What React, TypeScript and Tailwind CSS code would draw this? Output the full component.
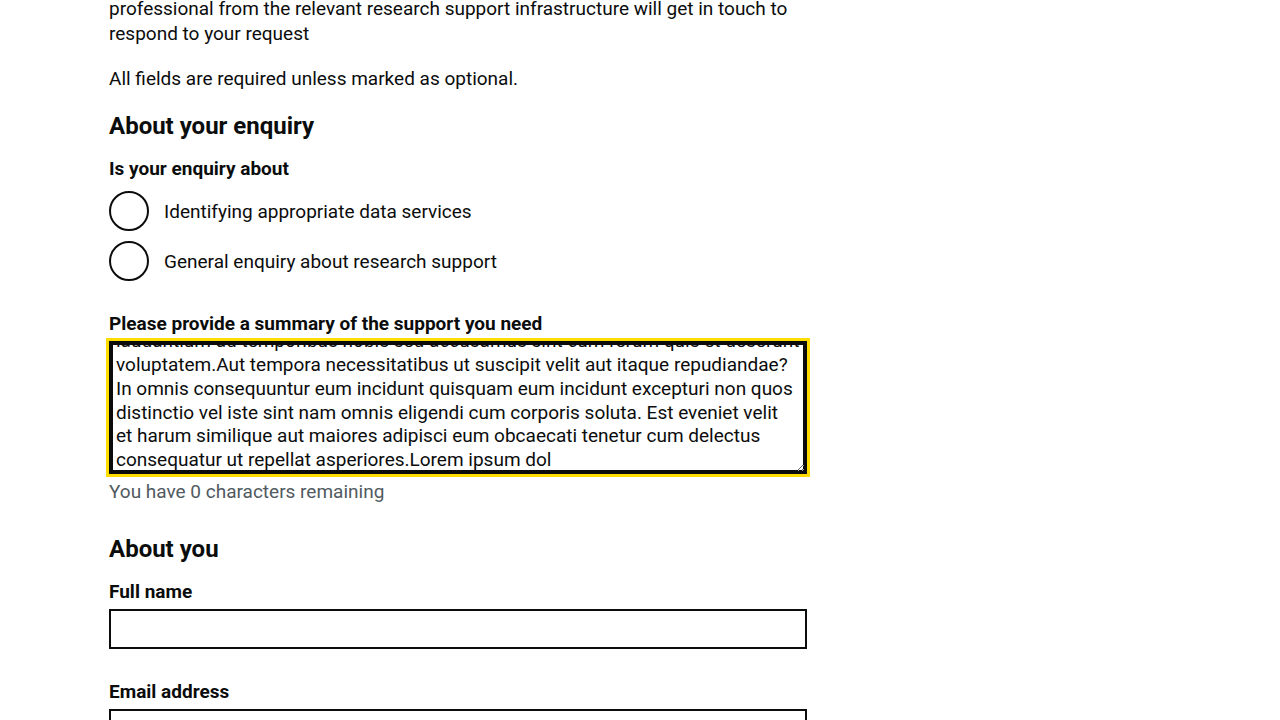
import React, { useEffect, useRef } from "react";

const TEXT =
  "Lorem ipsum dolor sit amet. Sed quia voluptas ut dolores galisum et nostrum molestiae qui internos ullam. Et consequatur voluptatem qui error atque sit dolor aliquam non officia.\nlaudantium ad temporibus nobis sed accusamus sint cum rerum quis et deserunt voluptatem.Aut tempora necessitatibus ut suscipit velit aut itaque repudiandae? In omnis consequuntur eum incidunt quisquam eum incidunt excepturi non quos distinctio vel iste sint nam omnis eligendi cum corporis soluta. Est eveniet velit\net harum similique aut maiores adipisci eum obcaecati tenetur cum delectus consequatur ut repellat asperiores.Lorem ipsum dol";

function Radio({ label }: { label: string }) {
  return (
    <div className="flex items-center h-[40px] mb-[10px]">
      <span className="w-[40px] h-[40px] rounded-full border-2 border-[#0b0c0c] bg-white shrink-0" />
      <span className="pl-[15px] text-[19px] leading-[25px]">{label}</span>
    </div>
  );
}

export default function App() {
  const ta = useRef<HTMLTextAreaElement>(null);
  useEffect(() => {
    const el = ta.current;
    if (el) el.scrollTop = el.scrollHeight - el.clientHeight - 5;
  }, []);

  return (
    <div
      className="h-[720px] overflow-hidden bg-white text-[#0b0c0c]"
      style={{ fontFamily: "Roboto, 'Noto Sans', sans-serif" }}
    >
      <div className="pl-[109px] -mt-[29px]">
        <div className="w-[698px]">
          <p className="text-[19px] leading-[25px] mb-[20px]">
            Tell us what you need help with and a research data
            <br />
            professional from the relevant research support infrastructure will get in touch to
            <br />
            respond to your request
          </p>
          <p className="text-[19px] leading-[25px] mb-[20px]">
            All fields are required unless marked as optional.
          </p>

          <h2 className="text-[24px] leading-[30px] font-bold mb-[15px]">About your enquiry</h2>
          <div className="mb-[30px]">
            <div className="text-[19px] leading-[25px] font-bold mb-[10px]">Is your enquiry about</div>
            <Radio label="Identifying appropriate data services" />
            <Radio label="General enquiry about research support" />
          </div>

          <div className="mb-[30px]">
            <label className="block text-[19px] leading-[25px] font-bold mb-[5px]">
              Please provide a summary of the support you need
            </label>
            <textarea
              ref={ta}
              rows={5}
              readOnly
              value={TEXT}
              className="block w-full h-[133px] border-2 border-[#0b0c0c] px-[5px] py-[5px] text-[19px] leading-[1.25] overflow-hidden outline-[3px] outline-solid outline-[#ffdd00] shadow-[inset_0_0_0_2px_#0b0c0c] resize-y"
              style={{ fontFamily: "Roboto, 'Noto Sans', sans-serif" }}
            />
            <div className="mt-[5px] text-[19px] leading-[25px] text-[#505a5f]">
              You have 0 characters remaining
            </div>
          </div>

          <h2 className="text-[24px] leading-[30px] font-bold mb-[15px]">About you</h2>
          <div className="mb-[30px]">
            <label className="block text-[19px] leading-[25px] font-bold mb-[5px]">Full name</label>
            <input type="text" className="block w-full h-[40px] border-2 border-[#0b0c0c] px-[5px] text-[19px] bg-white" />
          </div>
          <div className="mb-[30px]">
            <label className="block text-[19px] leading-[25px] font-bold mb-[5px]">Email address</label>
            <input type="email" className="block w-full h-[40px] border-2 border-[#0b0c0c] px-[5px] text-[19px] bg-white" />
          </div>
        </div>
      </div>
    </div>
  );
}
